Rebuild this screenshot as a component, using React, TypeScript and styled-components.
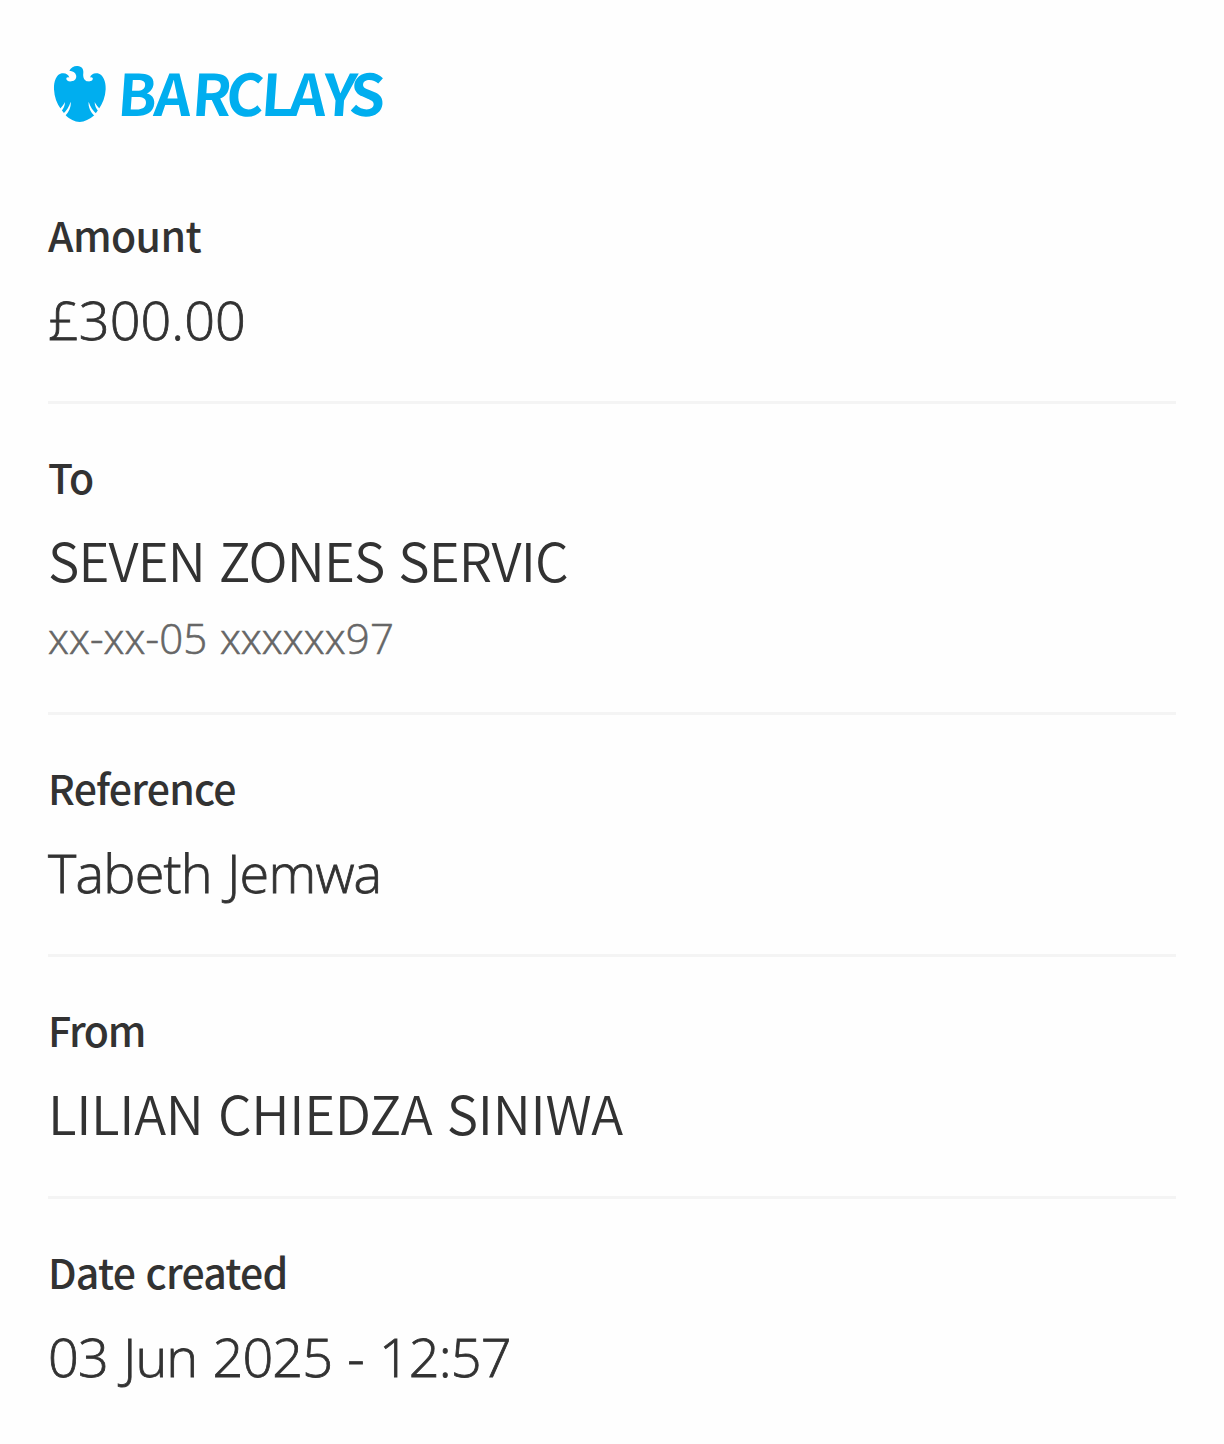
import React from "react";
import styled, { createGlobalStyle } from "styled-components";

const GlobalStyle = createGlobalStyle`
  body {
    margin: 0;
    background: #fefefe;
  }
`;

const capsFont = `"Noto Sans CJK JP", "Open Sans", sans-serif`;
const textFont = `"Open Sans", "Noto Sans", sans-serif`;

const Page = styled.main`
  box-sizing: border-box;
  min-height: 1444px;
  padding: 0 48px;
  color: #323232;
  font-family: ${capsFont};
`;

const Header = styled.header`
  display: flex;
  height: 162px;
  box-sizing: border-box;
  padding-top: 40px;
`;

const Logo = styled.svg`
  display: block;
  width: 360px;
  height: 110px;
  overflow: visible;
`;

const Section = styled.section`
  display: flex;
  flex-direction: column;
  align-items: flex-start;
  padding: 42px 0 44px;

  & + & {
    border-top: 3px solid #f4f4f4;
  }
`;

type Tracking = { $spacing?: number; $wordSpacing?: number };

const Label = styled.h2<Tracking>`
  margin: 0;
  font-size: 41px;
  line-height: 60px;
  font-weight: 500;
  letter-spacing: ${(p) => p.$spacing ?? 0}px;
  word-spacing: ${(p) => p.$wordSpacing ?? 0}px;
  white-space: nowrap;
`;

const Value = styled.p<Tracking & { $caps?: boolean }>`
  margin: ${(p) => (p.$caps ? "15px 0 2px" : "17px 0 0")};
  font-family: ${(p) => (p.$caps ? capsFont : textFont)};
  font-size: ${(p) => (p.$caps ? 53 : 54)}px;
  line-height: 76px;
  font-weight: ${(p) => (p.$caps ? 350 : 300)};
  -webkit-text-stroke: ${(p) => (p.$caps ? 0 : 0.8)}px currentColor;
  letter-spacing: ${(p) => p.$spacing ?? 0}px;
  word-spacing: ${(p) => p.$wordSpacing ?? 0}px;
  white-space: nowrap;
`;

const Detail = styled.p<Tracking>`
  margin: 9px 0 0;
  color: #666;
  font-family: ${textFont};
  font-size: 42px;
  line-height: 60px;
  font-weight: 300;
  -webkit-text-stroke: 0.6px currentColor;
  letter-spacing: 0.1px;
  word-spacing: 1.5px;
  white-space: nowrap;
`;

type Copy = { text: string; spacing?: number; wordSpacing?: number; caps?: boolean };
type Entry = { label: Copy; value: Copy; detail?: string };

const entries: Entry[] = [
  { label: { text: "Amount", spacing: -0.6 }, value: { text: "£300.00" } },
  {
    label: { text: "To", spacing: -0.8 },
    value: { text: "SEVEN ZONES SERVIC", spacing: -0.9, wordSpacing: 3, caps: true },
    detail: "xx-xx-05 xxxxxx97",
  },
  {
    label: { text: "Reference", spacing: -0.8 },
    value: { text: "Tabeth Jemwa", spacing: -0.8, wordSpacing: 2 },
  },
  {
    label: { text: "From", spacing: -1.4 },
    value: { text: "LILIAN CHIEDZA SINIWA", spacing: -0.3, wordSpacing: 3, caps: true },
  },
  {
    label: { text: "Date created", spacing: -0.8, wordSpacing: 2 },
    value: { text: "03 Jun 2025 - 12:57", spacing: -0.9, wordSpacing: 2 },
  },
];

function BarclaysLogo() {
  return (
    <Logo viewBox="48 40 360 110" role="img" aria-label="Barclays">
      <g transform="translate(44 56) scale(.33333)">
        <path
          fill="#00aeef"
          d="M76 44C81 34 91 29 101 30C113 31 119 39 118 50C116 64 121 75 132 76C142 77 148 72 146 66C144 63 140 63 138 65C140 55 150 50 161 52C177 55 186 76 185 100C184 123 176 143 164 160L151 178C137 190 121 198 107 198C92 198 77 190 65 178L51 160C38 143 31 123 30 100C29 76 37 55 53 52C64 50 74 55 76 65C73 63 69 63 67 66C66 73 73 77 82 76C93 75 99 66 96 57C94 49 86 45 76 44Z"
        />
        <path
          fill="#fefefe"
          d="M44 163C53 153 59 146 63 138C63 148 59 158 51 167ZM57 174C67 164 75 153 80 137C82 153 74 168 63 180ZM171 163C162 153 156 146 152 138C152 148 156 158 164 167ZM158 174C147 164 139 153 134 137C132 153 140 168 152 180Z"
        />
      </g>
      <text
        transform="translate(0 115.7) skewX(-4)"
        x="116.5 153 191 225 260 288 322 348"
        y="0"
        fill="#00aeef"
        fontFamily="Noto Sans CJK JP, sans-serif"
        fontSize="57.5"
        fontWeight="700"
      >
        BARCLAYS
      </text>
    </Logo>
  );
}

export default function App() {
  return (
    <>
      <GlobalStyle />
      <Page>
        <Header>
          <BarclaysLogo />
        </Header>
        {entries.map(({ label, value, detail }) => (
          <Section key={label.text}>
            <Label $spacing={label.spacing} $wordSpacing={label.wordSpacing}>
              {label.text}
            </Label>
            <Value $caps={value.caps} $spacing={value.spacing} $wordSpacing={value.wordSpacing}>
              {value.text}
            </Value>
            {detail && <Detail>{detail}</Detail>}
          </Section>
        ))}
      </Page>
    </>
  );
}
